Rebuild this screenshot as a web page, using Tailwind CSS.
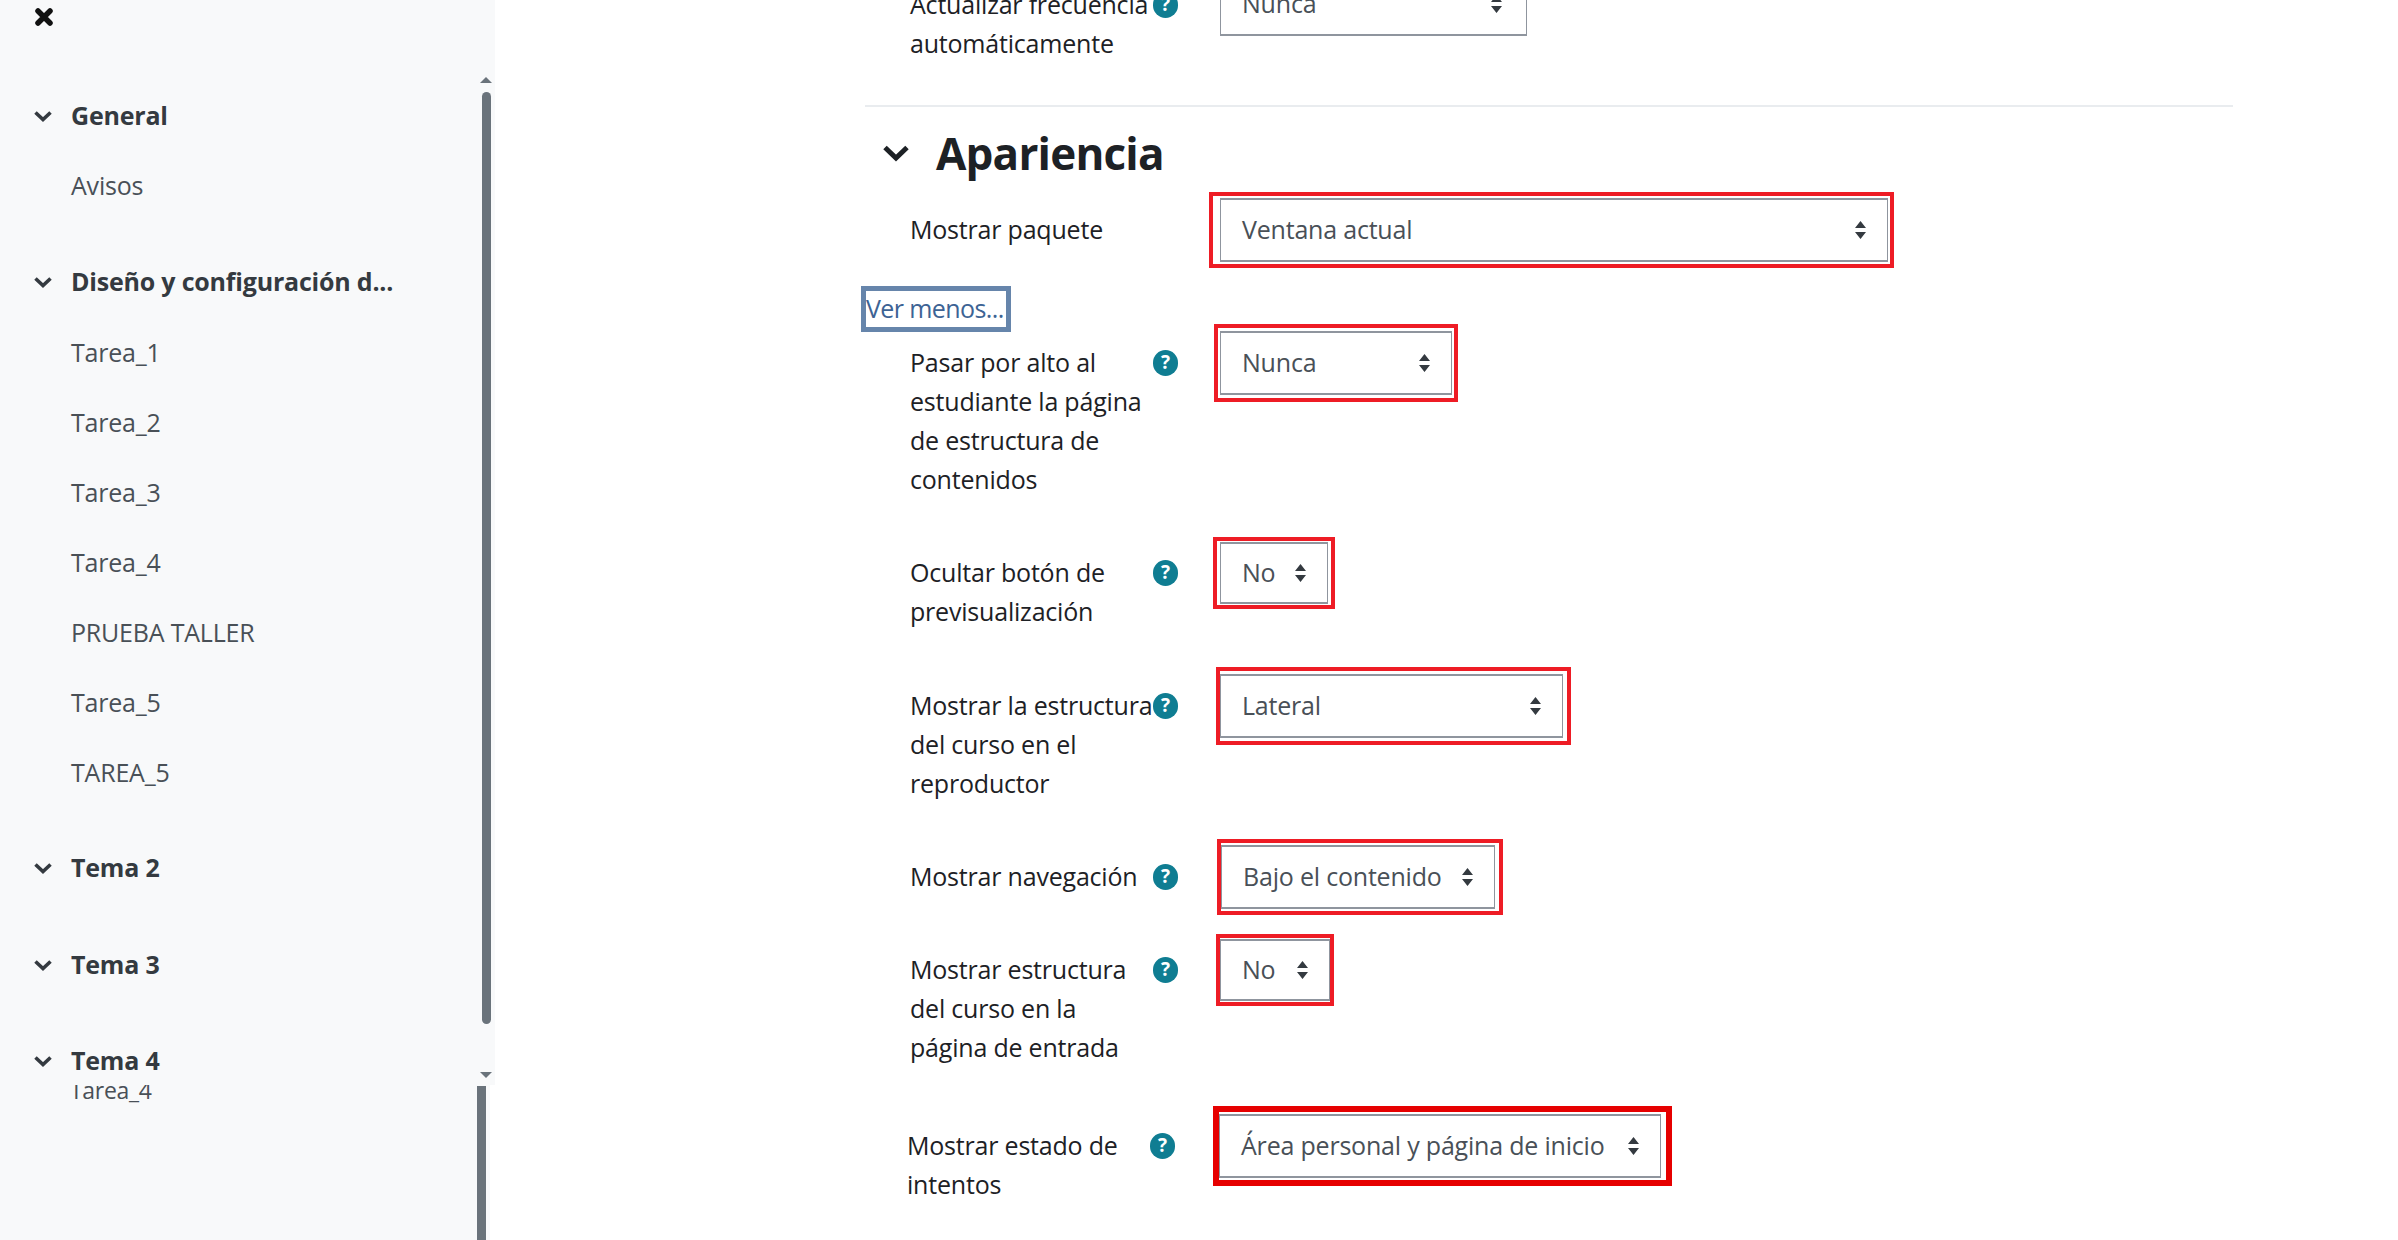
<!DOCTYPE html>
<html lang="es">
<head>
<meta charset="utf-8">
<title>Apariencia</title>
<script src="https://cdn.jsdelivr.net/npm/@tailwindcss/browser@4"></script>
</head>
<body class="w-[2398px] h-[1240px] overflow-hidden bg-white flex font-['Open_Sans','Noto_Sans',sans-serif] text-[25px] tracking-[-0.2px] text-[#1d2125]">

<aside class="relative w-[490px] h-[1240px] shrink-0 bg-[#f8f9fa]">
  <div class="relative w-[495px] h-[1085px] bg-[#f8f9fa] overflow-hidden z-10">
    <svg class="absolute left-[34px] top-[7px] w-[20px] h-[20px]" viewBox="0 0 20 20"><path d="M4 4 L16 16 M16 4 L4 16" stroke="#111" stroke-width="5.5" stroke-linecap="round" fill="none"/></svg>
    <nav class="pt-[93px] pl-[33px] text-[#495057]">
      <div class="flex items-center h-[46px] font-bold text-[#343a40]"><svg class="w-[20px] h-[12px] mr-[18px]" viewBox="0 0 20 12"><path d="M2.5 2.5 L10 9.5 L17.5 2.5" stroke="#343a40" stroke-width="3.6" fill="none"/></svg>General</div>
      <div class="pl-[38px] flex items-center h-[46px] mt-[24px]">Avisos</div>
      <div class="flex items-center h-[46px] mt-[50px] font-bold text-[#343a40] whitespace-nowrap"><svg class="w-[20px] h-[12px] mr-[18px]" viewBox="0 0 20 12"><path d="M2.5 2.5 L10 9.5 L17.5 2.5" stroke="#343a40" stroke-width="3.6" fill="none"/></svg>Diseño y configuración d...</div>
      <ul class="pl-[38px] flex flex-col gap-[24px] mt-[25px]">
        <li class="h-[46px] flex items-center">Tarea_1</li>
        <li class="h-[46px] flex items-center">Tarea_2</li>
        <li class="h-[46px] flex items-center">Tarea_3</li>
        <li class="h-[46px] flex items-center">Tarea_4</li>
        <li class="h-[46px] flex items-center">PRUEBA TALLER</li>
        <li class="h-[46px] flex items-center">Tarea_5</li>
        <li class="h-[46px] flex items-center">TAREA_5</li>
      </ul>
      <div class="flex items-center h-[46px] mt-[49px] font-bold text-[#343a40]"><svg class="w-[20px] h-[12px] mr-[18px]" viewBox="0 0 20 12"><path d="M2.5 2.5 L10 9.5 L17.5 2.5" stroke="#343a40" stroke-width="3.6" fill="none"/></svg>Tema 2</div>
      <div class="flex items-center h-[46px] mt-[51px] font-bold text-[#343a40]"><svg class="w-[20px] h-[12px] mr-[18px]" viewBox="0 0 20 12"><path d="M2.5 2.5 L10 9.5 L17.5 2.5" stroke="#343a40" stroke-width="3.6" fill="none"/></svg>Tema 3</div>
      <div class="flex items-center h-[46px] mt-[50px] font-bold text-[#343a40]"><svg class="w-[20px] h-[12px] mr-[18px]" viewBox="0 0 20 12"><path d="M2.5 2.5 L10 9.5 L17.5 2.5" stroke="#343a40" stroke-width="3.6" fill="none"/></svg>Tema 4</div>
    </nav>
    <svg class="absolute left-[479px] top-[76px] w-[14px] h-[8px]" viewBox="0 0 14 8"><path d="M7 1 L13 7 L1 7 Z" fill="#6a737b"/></svg>
    <div class="absolute left-[482px] top-[92px] w-[9px] h-[932px] rounded-full bg-[#6a737b]"></div>
    <svg class="absolute left-[479px] top-[1071px] w-[14px] h-[8px]" viewBox="0 0 14 8"><path d="M7 7 L13 1 L1 1 Z" fill="#6a737b"/></svg>
  </div>
  <div class="absolute left-[70px] top-[1073px] text-[#495057] text-[23px] tracking-[-0.3px]">Tarea_4</div>
  <div class="absolute left-[70px] top-[1231px] text-[#495057] text-[23px] tracking-[-0.3px]">Tarea_5</div>
  <div class="absolute left-[477px] top-[1086px] w-[9px] h-[154px] bg-[#6a737b]"></div>
</aside>

<main class="w-[1908px] h-[1240px] overflow-hidden pl-[375px] text-[#1d2125]">
  <div class="-mt-[15px] pl-[45px] flex mb-[42px]">
    <div class="w-[243px] leading-[39px] whitespace-nowrap">Actualizar frecuencia<br>automáticamente</div>
    <div class="w-[25px] h-[39px] flex items-center"><span class="w-[25px] h-[26px] rounded-full bg-[#0f7d92] text-white text-[19px] font-bold flex items-center justify-center">?</span></div>
    <div class="ml-[42px] h-[39px] flex items-center">
      <div class="w-[307px] h-[62px] bg-white border border-[#8f959e] border-b-2 pl-[21px] pr-[23px] flex items-center justify-between text-[#495057]">Nunca
        <svg class="w-[13px] h-[20px]" viewBox="0 0 13 20"><path d="M6.5 1 L12 8 L1 8 Z M6.5 19 L12 12 L1 12 Z" fill="#343a40"/></svg></div>
    </div>
  </div>
  <div class="h-[2px] w-[1368px] bg-[#e9ecef]"></div>
  <h3 class="flex items-center h-[60px] mt-[16px] mb-[27px] pl-[17px] text-[44px] font-bold tracking-[-0.8px] text-[#1d2125]">
    <svg class="w-[28px] h-[18px] mr-[26px]" viewBox="0 0 28 18"><path d="M3 3.5 L14 14 L25 3.5" stroke="#1d2125" stroke-width="5" fill="none"/></svg>Apariencia
  </h3>

  <div class="pl-[45px] flex">
    <div class="w-[243px] leading-[39px] whitespace-nowrap">Mostrar paquete</div>
    <div class="w-[25px]"></div>
    <div class="ml-[42px] h-[39px] flex items-center">
      <div class="-ml-[11px] border-4 border-[#ee1c25] pl-[7px] pr-[2px] py-[2px] shrink-0">
        <div class="w-[668px] h-[64px] bg-white border border-[#8f959e] border-y-2 pl-[21px] pr-[20px] flex items-center justify-between text-[#495057]">Ventana actual
          <svg class="w-[13px] h-[20px]" viewBox="0 0 13 20"><path d="M6.5 1 L12 8 L1 8 Z M6.5 19 L12 12 L1 12 Z" fill="#343a40"/></svg></div>
      </div>
    </div>
  </div>

  <div class="mt-[37px] -ml-[4px] w-[150px] h-[46px] border-[5px] border-[#6685ab] flex items-center whitespace-nowrap text-[#3d6394] text-[25px] tracking-[-0.6px]">Ver menos...</div>

  <div class="mt-[11px] pl-[45px] flex mb-[54px]">
    <div class="w-[243px] leading-[39px] whitespace-nowrap">Pasar por alto al<br>estudiante la página<br>de estructura de<br>contenidos</div>
    <div class="w-[25px] h-[39px] flex items-center"><span class="w-[25px] h-[26px] rounded-full bg-[#0f7d92] text-white text-[19px] font-bold flex items-center justify-center">?</span></div>
    <div class="ml-[42px] h-[39px] flex items-center">
      <div class="-ml-[6px] border-4 border-[#ee1c25] pl-[2px] pr-[2px] py-[3px] shrink-0">
        <div class="w-[232px] h-[64px] bg-white border border-[#8f959e] border-y-2 pl-[21px] pr-[20px] flex items-center justify-between text-[#495057]">Nunca
          <svg class="w-[13px] h-[20px]" viewBox="0 0 13 20"><path d="M6.5 1 L12 8 L1 8 Z M6.5 19 L12 12 L1 12 Z" fill="#343a40"/></svg></div>
      </div>
    </div>
  </div>

  <div class="pl-[45px] flex mb-[55px]">
    <div class="w-[243px] leading-[39px] whitespace-nowrap">Ocultar botón de<br>previsualización</div>
    <div class="w-[25px] h-[39px] flex items-center"><span class="w-[25px] h-[26px] rounded-full bg-[#0f7d92] text-white text-[19px] font-bold flex items-center justify-center">?</span></div>
    <div class="ml-[42px] h-[39px] flex items-center">
      <div class="-ml-[7px] border-4 border-[#ee1c25] pl-[3px] pr-[3px] py-[1px] shrink-0">
        <div class="w-[108px] h-[62px] bg-white border border-[#8f959e] border-y-2 pl-[21px] pr-[20px] flex items-center justify-between text-[#495057]">No
          <svg class="w-[13px] h-[20px]" viewBox="0 0 13 20"><path d="M6.5 1 L12 8 L1 8 Z M6.5 19 L12 12 L1 12 Z" fill="#343a40"/></svg></div>
      </div>
    </div>
  </div>

  <div class="pl-[45px] flex mb-[54px]">
    <div class="w-[243px] leading-[39px] whitespace-nowrap">Mostrar la estructura<br>del curso en el<br>reproductor</div>
    <div class="w-[25px] h-[39px] flex items-center"><span class="w-[25px] h-[26px] rounded-full bg-[#0f7d92] text-white text-[19px] font-bold flex items-center justify-center">?</span></div>
    <div class="ml-[42px] h-[39px] flex items-center">
      <div class="-ml-[4px] border-4 border-[#ee1c25] pl-[0px] pr-[4px] py-[3px] shrink-0">
        <div class="w-[343px] h-[64px] bg-white border border-[#8f959e] border-y-2 pl-[21px] pr-[20px] flex items-center justify-between text-[#495057]">Lateral
          <svg class="w-[13px] h-[20px]" viewBox="0 0 13 20"><path d="M6.5 1 L12 8 L1 8 Z M6.5 19 L12 12 L1 12 Z" fill="#343a40"/></svg></div>
      </div>
    </div>
  </div>

  <div class="pl-[45px] flex mb-[54px]">
    <div class="w-[243px] leading-[39px] whitespace-nowrap">Mostrar navegación</div>
    <div class="w-[25px] h-[39px] flex items-center"><span class="w-[25px] h-[26px] rounded-full bg-[#0f7d92] text-white text-[19px] font-bold flex items-center justify-center">?</span></div>
    <div class="ml-[42px] h-[39px] flex items-center">
      <div class="-ml-[3px] border-4 border-[#ee1c25] pl-[0px] pr-[4px] py-[2px] shrink-0">
        <div class="w-[274px] h-[64px] bg-white border border-[#8f959e] border-y-2 pl-[21px] pr-[20px] flex items-center justify-between text-[#495057] whitespace-nowrap">Bajo el contenido
          <svg class="w-[13px] h-[20px]" viewBox="0 0 13 20"><path d="M6.5 1 L12 8 L1 8 Z M6.5 19 L12 12 L1 12 Z" fill="#343a40"/></svg></div>
      </div>
    </div>
  </div>

  <div class="pl-[45px] flex mb-[59px]">
    <div class="w-[243px] leading-[39px] whitespace-nowrap">Mostrar estructura<br>del curso en la<br>página de entrada</div>
    <div class="w-[25px] h-[39px] flex items-center"><span class="w-[25px] h-[26px] rounded-full bg-[#0f7d92] text-white text-[19px] font-bold flex items-center justify-center">?</span></div>
    <div class="ml-[42px] h-[39px] flex items-center">
      <div class="-ml-[4px] border-4 border-[#ee1c25] pl-[0px] pr-[0px] py-[1px] shrink-0">
        <div class="w-[110px] h-[62px] bg-white border border-[#8f959e] border-y-2 pl-[21px] pr-[20px] flex items-center justify-between text-[#495057]">No
          <svg class="w-[13px] h-[20px]" viewBox="0 0 13 20"><path d="M6.5 1 L12 8 L1 8 Z M6.5 19 L12 12 L1 12 Z" fill="#343a40"/></svg></div>
      </div>
    </div>
  </div>

  <div class="pl-[42px] flex">
    <div class="w-[243px] leading-[39px] whitespace-nowrap">Mostrar estado de<br>intentos</div>
    <div class="w-[25px] h-[39px] flex items-center"><span class="w-[25px] h-[26px] rounded-full bg-[#0f7d92] text-white text-[19px] font-bold flex items-center justify-center">?</span></div>
    <div class="ml-[42px] h-[39px] flex items-center">
      <div class="-ml-[4px] border-[6px] border-[#e60000] pl-[0px] pr-[5px] py-[2px] shrink-0">
        <div class="w-[442px] h-[64px] bg-white border border-[#8f959e] border-y-2 pl-[21px] pr-[20px] flex items-center justify-between text-[#495057] whitespace-nowrap">Área personal y página de inicio
          <svg class="w-[13px] h-[20px]" viewBox="0 0 13 20"><path d="M6.5 1 L12 8 L1 8 Z M6.5 19 L12 12 L1 12 Z" fill="#343a40"/></svg></div>
      </div>
    </div>
  </div>
</main>
</body>
</html>
